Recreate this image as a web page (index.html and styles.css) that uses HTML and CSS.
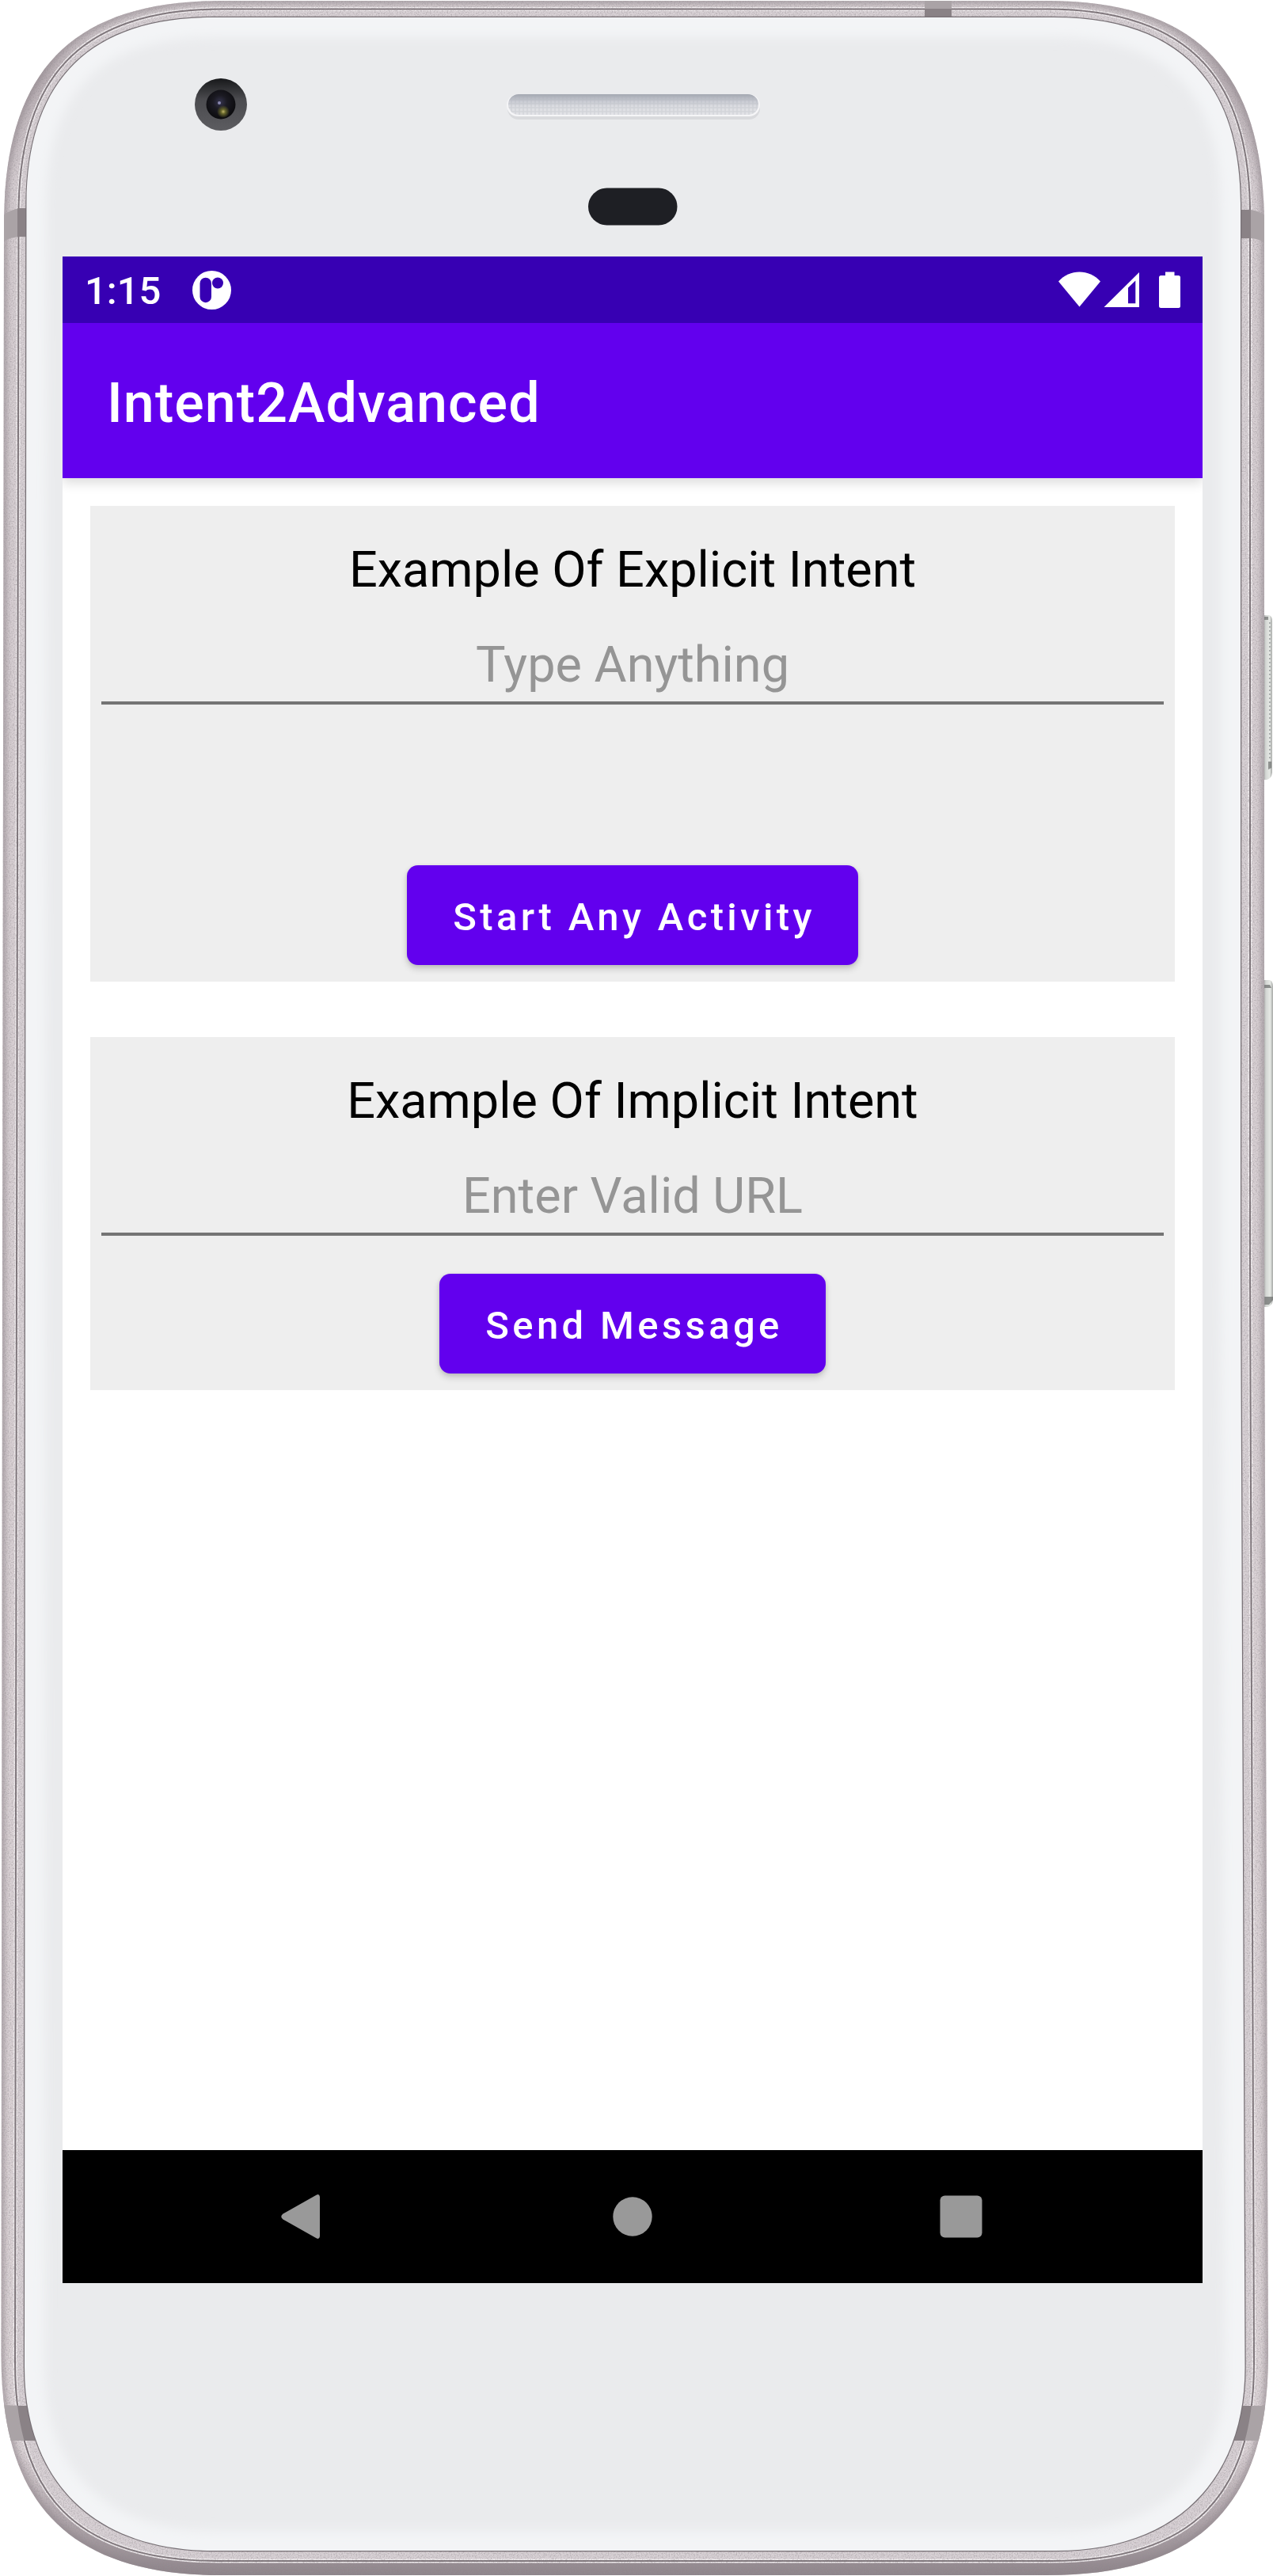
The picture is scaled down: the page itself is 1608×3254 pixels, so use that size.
FILE: index.html
```html
<!DOCTYPE html>
<html lang="en">
<head>
<meta charset="utf-8">
<title>Intent2Advanced</title>
<link rel="stylesheet" href="styles.css">
</head>
<body>
<main class="phone">
  <svg class="shell" viewBox="0 0 1608 3254" aria-hidden="true">
    <defs>
      <path id="outer" d="M5 285C5 95 85 1 280 1H1322C1517 1 1597 95 1597 285V1600L1602 2975C1602 3150 1528 3253 1323 3253H280C75 3253 1.5 3150 1.5 2975L3 1600Z"/>
      <path id="seam" d="M23.5 270C23.5 105 95 11.5 280 11.5H1322C1507 11.5 1579 105 1579 270V1600L1584 2985C1584 3150 1508 3235 1328 3235H275C95 3235 19 3150 19 2985L21 1600Z"/>
      <path id="glass" d="M33.5 260C33.5 110 105 22 270 22H1330C1495 22 1567 110 1567 260V1600L1572.5 2990C1572.5 3130 1488 3222 1333 3222H270C115 3222 31 3130 31 2990L32 1600Z"/>
      <clipPath id="outer-clip"><use href="#outer"/></clipPath>
      <clipPath id="seam-clip"><use href="#seam"/></clipPath>
      <clipPath id="glass-clip"><use href="#glass"/></clipPath>
      <filter id="soft" x="-5%" y="-5%" width="110%" height="110%"><feGaussianBlur stdDeviation="7"/></filter>
      <filter id="soft-small" x="-5%" y="-5%" width="110%" height="110%"><feGaussianBlur stdDeviation="3"/></filter>
      <filter id="grain" x="0" y="0" width="100%" height="100%">
        <feTurbulence type="fractalNoise" baseFrequency="0.6" numOctaves="2" seed="4"/>
        <feColorMatrix values="0 0 0 0 .3  0 0 0 0 .27  0 0 0 0 .29  1.2 0 0 0 -.5"/>
      </filter>
      <linearGradient id="metal" x1="0" y1="0" x2="0" y2="1">
        <stop offset="0" stop-color="#dcd5d8"/><stop offset=".012" stop-color="#cfc7cb"/><stop offset=".03" stop-color="#b8aeb3"/>
        <stop offset=".07" stop-color="#d6ced2"/><stop offset=".95" stop-color="#ddd5d8"/><stop offset=".975" stop-color="#b5abb0"/><stop offset="1" stop-color="#8f858b"/>
      </linearGradient>
      <linearGradient id="speaker" x1="0" y1="0" x2="0" y2="1">
        <stop offset="0" stop-color="#a3a7b1"/><stop offset=".35" stop-color="#c9cbd3"/><stop offset=".6" stop-color="#dcdde2"/><stop offset="1" stop-color="#e2e3e7"/>
      </linearGradient>
      <pattern id="mesh" width="5" height="5" patternUnits="userSpaceOnUse"><path d="M0 1H5M1 0V5" stroke="#a9abb5" stroke-opacity=".25" stroke-width="1.5"/></pattern>
      <radialGradient id="lens" cx=".47" cy=".42" r=".6"><stop offset="0" stop-color="#35344d"/><stop offset=".4" stop-color="#1b1a22"/><stop offset="1" stop-color="#0a0a0c"/></radialGradient>
      <radialGradient id="glint"><stop offset="0" stop-color="#c2b66a"/><stop offset=".35" stop-color="#66662b"/><stop offset="1" stop-color="#66662b" stop-opacity="0"/></radialGradient>
      <linearGradient id="ring" x1="0" y1="0" x2="0" y2="1"><stop offset="0" stop-color="#17181a"/><stop offset=".4" stop-color="#4b4b4f"/><stop offset="1" stop-color="#5c5c60"/></linearGradient>
      <linearGradient id="key" x1="0" y1="0" x2="1" y2="0"><stop offset="0" stop-color="#9b9c9b"/><stop offset=".25" stop-color="#d3d6d3"/><stop offset=".7" stop-color="#e6e9e5"/><stop offset="1" stop-color="#a6a8a6"/></linearGradient>
    </defs>

    <!-- side keys -->
    <path d="M1596 777H1603Q1607 778 1607 785V976Q1606 984 1600 985H1596Z" fill="url(#key)"/>
    <path d="M1602 962H1606V970L1602 972ZM1597 779H1602V783H1597Z" fill="#6b6d6c" opacity=".7"/>
    <path d="M1604 786V958" stroke="#a9adad" stroke-width="2" stroke-dasharray="2 3"/>
    <path d="M1596 1238H1604Q1608 1240 1608 1246V1642Q1607 1650 1601 1651H1596Z" fill="url(#key)"/>
    <path d="M1597 1244H1604L1606 1248H1597ZM1597 1638H1608V1642L1603 1648H1597Z" fill="#6f7170" opacity=".75"/>

    <!-- metal frame -->
    <use href="#outer" fill="url(#metal)"/>
    <g clip-path="url(#outer-clip)">
      <use href="#outer" fill="none" stroke="#8f858b" stroke-width="9" opacity=".6" filter="url(#soft-small)"/>
    </g>
    <use href="#seam" fill="#d8d1d5" stroke="#f1edef" stroke-width="5"/>
    <use href="#seam" fill="none" stroke="#7c7378" stroke-width="2"/>
    <g clip-path="url(#outer-clip)"><rect width="1608" height="3254" filter="url(#grain)"/></g>

    <!-- antenna bands -->
    <g clip-path="url(#outer-clip)">
      <path d="M0 275Q12 265 24 263H36V299H24Q12 300 0 307Z" fill="#aaa3a6"/>
      <path d="M22 263H36V299H22Z" fill="#8a8286"/>
      <path d="M1602 275Q1592 267 1580 265H1566V301H1580Q1592 302 1602 309Z" fill="#aaa3a6"/>
      <path d="M1566 265H1580V301H1566Z" fill="#8a8286"/>
      <path d="M1168 0H1202V24H1168Z" fill="#aaa3a6"/>
      <path d="M1168 11H1202V24H1168Z" fill="#8a8286"/>
      <path d="M0 3038L60 3040V3083H0ZM1550 3039H1608V3083H1550Z" fill="#aaa3a6"/>
      <g clip-path="url(#seam-clip)"><path d="M0 3039H60V3083H0ZM1550 3039H1608V3083H1550Z" fill="#8a8286"/></g>
    </g>

    <!-- front glass -->
    <use href="#glass" fill="#eaebed" stroke="#777075" stroke-width="2.5"/>
    <g clip-path="url(#glass-clip)">
      <use href="#glass" fill="none" stroke="#f3f4f6" stroke-width="50" filter="url(#soft)"/>
    </g>

    <!-- camera -->
    <circle cx="279" cy="132" r="33" fill="url(#ring)"/>
    <circle cx="279" cy="132" r="18.5" fill="url(#lens)"/>
    <circle cx="282" cy="141" r="8" fill="url(#glint)"/>
    <circle cx="277" cy="130" r="2" fill="#8a88b0"/>

    <!-- earpiece and proximity sensor -->
    <rect x="641" y="123" width="319" height="28" rx="14" fill="#d9dadd"/>
    <rect x="640" y="119" width="320" height="28" rx="14" fill="#f5f5f7"/>
    <rect x="642" y="119" width="316" height="26" rx="13" fill="url(#speaker)"/>
    <rect x="642" y="119" width="316" height="26" rx="13" fill="url(#mesh)"/>
    <rect x="743" y="237.500" width="112.500" height="47" rx="23.500" fill="#1e1f24"/>
  </svg>

  <section class="screen">
    <header class="status-bar">
      <span class="clock">1:15</span>
      <svg class="notification" viewBox="0 0 49 49" aria-hidden="true">
        <circle cx="24.500" cy="24.500" r="24.500" fill="#fff"/>
        <rect x="9.500" y="8.700" width="14.500" height="31.500" rx="7.200" fill="#3700b3"/>
        <circle cx="32" cy="15.500" r="7" fill="#3700b3"/>
      </svg>
      <span class="spacer"></span>
      <svg class="indicators" viewBox="0 0 155 46" aria-hidden="true">
        <path fill="#fff" d="M0 12.500C14 -3.500 39 -3.500 53 12.500L26.500 44.500Z"/>
        <path fill="#fff" fill-rule="evenodd" d="M57.500 45L102 1V45ZM88 20.500V40.300H97.300V11.500Z"/>
        <path fill="#fff" d="M135 0.500H146.500V5H151.500Q154 5 154 7.500V43.500Q154 46 151.500 46H129.500Q127 46 127 43.500V7.500Q127 5 129.500 5H135Z"/>
      </svg>
    </header>
    <div class="app-bar"><h1 class="app-title">Intent2Advanced</h1></div>

    <div class="content">
      <section class="card card-explicit">
        <h2 class="card-title">Example Of Explicit Intent</h2>
        <input class="field" type="text" placeholder="Type Anything">
        <button class="button">Start Any Activity</button>
      </section>
      <section class="card card-implicit">
        <h2 class="card-title">Example Of Implicit Intent</h2>
        <input class="field" type="text" placeholder="Enter Valid URL">
        <button class="button">Send Message</button>
      </section>
    </div>

    <nav class="nav-bar">
      <svg class="nav-icon" viewBox="0 0 60 60" aria-hidden="true"><path d="M50 5V55Q49.500 59 46 57.500L3.500 33.500Q-1 30 3.500 26.500L46 2.500Q49.500 1 50 5Z" fill="#999"/></svg>
      <svg class="nav-icon" viewBox="0 0 60 60" aria-hidden="true"><circle cx="30" cy="30" r="24.700" fill="#999"/></svg>
      <svg class="nav-icon" viewBox="0 0 60 60" aria-hidden="true"><rect x="3.500" y="3.500" width="53" height="53" rx="6" fill="#999"/></svg>
    </nav>
  </section>
</main>
</body>
</html>
```
FILE: styles.css
```css
* {
  box-sizing: border-box;
}

body {
  margin: 0;
  background: #fff;
  font-family: Roboto, "Liberation Sans", sans-serif;
}

.phone {
  position: relative;
  width: 1608px;
  height: 3254px;
  padding: 324px 89px 370px 79px;
  overflow: hidden;
}

.shell {
  position: absolute;
  inset: 0;
  width: 100%;
  height: 100%;
}

.screen {
  position: relative;
  display: flex;
  flex-direction: column;
  width: 1440px;
  height: 2560px;
  background: #fff;
}

.status-bar {
  display: flex;
  align-items: center;
  flex: none;
  height: 84px;
  padding: 0 27px 0 28px;
  background: #3700b3;
  color: #fff;
}

.clock {
  width: 136px;
  padding-top: 4px;
  font-size: 49px;
  font-weight: 500;
  line-height: 60px;
}

.notification {
  width: 49px;
  height: 49px;
}

.spacer {
  flex: 1;
}

.indicators {
  width: 155px;
  height: 46px;
}

.app-bar {
  display: flex;
  align-items: center;
  flex: none;
  height: 196px;
  padding: 6px 56px 0;
  background: #6200ee;
  box-shadow: 0 6px 14px rgba(0, 0, 0, 0.14);
  clip-path: inset(0 0 -35px 0);
  color: #fff;
}

.app-title {
  margin: 0;
  font-size: 70px;
  font-weight: 500;
  letter-spacing: 1.05px;
  line-height: 84px;
}

.content {
  display: flex;
  flex: 1;
  flex-direction: column;
  gap: 70px;
  padding: 35px;
}

.card {
  display: flex;
  flex-direction: column;
  align-items: center;
  padding: 36px 14px 21px;
  background: #eee;
}

.card-explicit {
  height: 601px;
}

.card-implicit {
  height: 446px;
}

.card-title {
  margin: 0;
  color: #000;
  font-size: 63px;
  font-weight: 400;
  line-height: 90px;
}

.field {
  width: 100%;
  height: 97px;
  margin: 28px 0 0;
  padding: 0;
  border: 0;
  border-bottom: 4px solid #747474;
  outline: 0;
  background: transparent;
  font: 400 63px/93px Roboto, "Liberation Sans", sans-serif;
  text-align: center;
}

.field::placeholder {
  color: #959595;
  opacity: 1;
}

.button {
  height: 126px;
  margin: auto 0 0;
  padding: 5px 54px 0 58px;
  border: 0;
  border-radius: 14px;
  background: #6200ee;
  box-shadow: 0 5px 8px rgba(0, 0, 0, 0.16), 0 1px 5px rgba(0, 0, 0, 0.1);
  color: #fff;
  font: 500 49px/60px Roboto, "Liberation Sans", sans-serif;
  letter-spacing: 4.375px;
}

.nav-bar {
  display: flex;
  align-items: center;
  justify-content: space-between;
  flex: none;
  height: 168px;
  padding: 0 275px;
  background: #000;
}

.nav-icon {
  width: 60px;
  height: 60px;
}
```
